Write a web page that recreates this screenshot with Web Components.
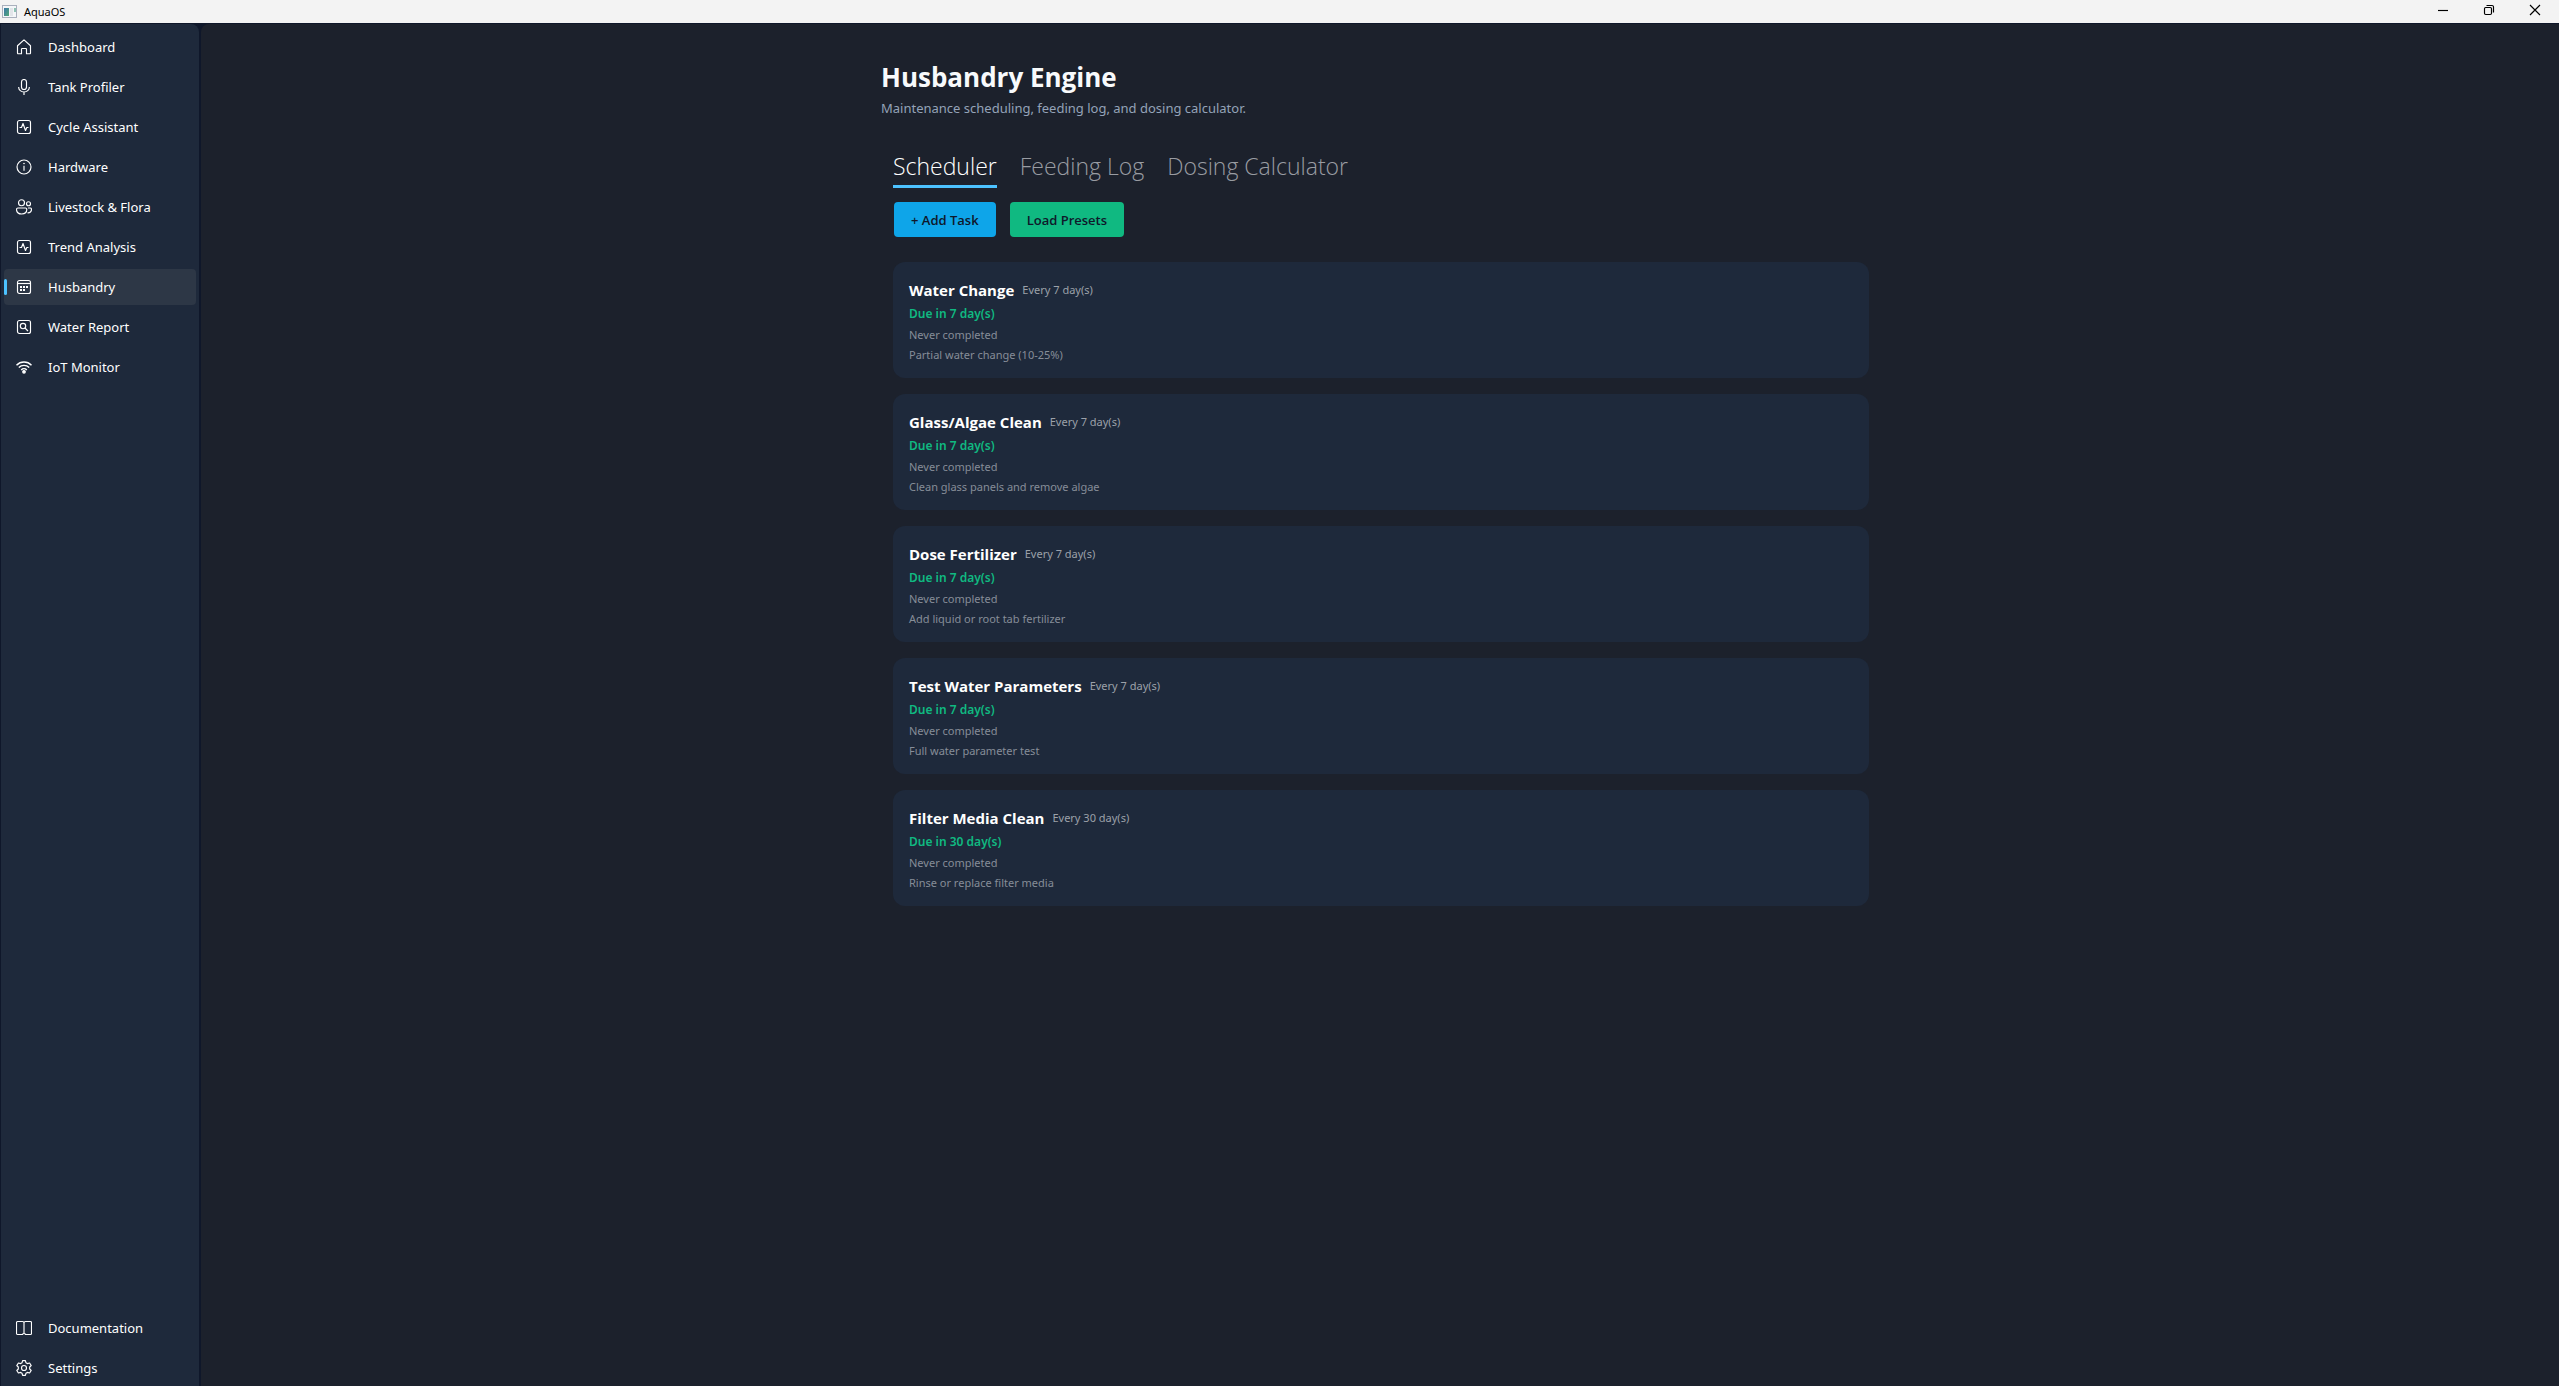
<!DOCTYPE html>
<html lang="en">
<head>
<meta charset="utf-8">
<meta name="viewport" content="width=device-width, initial-scale=1">
<title>AquaOS</title>
<style>
  html, body {
    height: 100%;
    margin: 0;
  }
  body {
    background: #0f172a;
    color: #fff;
    font-family: "Segoe UI", "Noto Sans", sans-serif;
    font-size: 13px;
    --display-font: "Segoe UI", "Open Sans", sans-serif;
  }
</style>
</head>
<body>
<aqua-app></aqua-app>

<script>
// 16x16 line icons
const ICONS = {
  home: '<path d="M1.500 6.700 8 .9l6.500 5.800V14a.7.7 0 0 1-.7.7h-3.300V10.200a.7.7 0 0 0-.7-.7H6.200a.7.7 0 0 0-.7.7v4.500H2.200a.7.7 0 0 1-.7-.7z"/>',
  mic: '<rect x="5.500" y=".5" width="5" height="10" rx="2.500"/><path d="M2.700 8v.5a5.300 4.500 0 0 0 10.600 0V8M8 13v3"/>',
  pulse: '<rect x="1.500" y="1.500" width="13" height="13" rx="2"/><path d="M3.500 8.500h2l1.500-4 2.500 7 1.300-3h1.700"/>',
  info: '<circle cx="8" cy="8" r="7"/><path d="M8 6.700v5"/><circle cx="8" cy="4.600" r=".5" fill="currentColor" stroke-width=".6"/>',
  people: '<circle cx="5.500" cy="3.700" r="3"/><circle cx="12.500" cy="4.700" r="2"/><path d="M2 9h7.500a1.300 1.300 0 0 1 1.300 1.300c0 3-2 4.700-5.100 4.700S.5 13.300.5 10.300A1.400 1.400 0 0 1 2 9zM12 9h2.200a1.300 1.300 0 0 1 1.300 1.300c0 2.200-1.500 3.700-4 3.500"/>',
  calendar: '<rect x="1.500" y="1.500" width="13" height="13" rx="2"/><path d="M1.500 4.500h13"/><g fill="currentColor" stroke="none"><rect x="4" y="7" width="2" height="2"/><rect x="7" y="7" width="2" height="2"/><rect x="10" y="7" width="2" height="2"/><rect x="4" y="10" width="2" height="2"/><rect x="7" y="10" width="2" height="2"/></g>',
  search: '<rect x="1.500" y="1.500" width="13" height="13" rx="2"/><circle cx="7" cy="7" r="2.700"/><path d="m9 9 3 3"/>',
  wifi: '<path d="M.5 6.200a10.500 10.500 0 0 1 15 0M2.800 8.600a7.300 7.300 0 0 1 10.400 0M5.200 10.900a4 4 0 0 1 5.600 0" stroke-width="1.400"/><circle cx="8" cy="12.800" r="1.300" fill="currentColor"/>',
  book: '<path d="M1.500 1.500h5A1.500 1.500 0 0 1 8 3a1.500 1.500 0 0 1 1.500-1.500h5a1 1 0 0 1 1 1v11a1 1 0 0 1-1 1h-5A1.500 1.500 0 0 0 8 13.500a1.500 1.500 0 0 0-1.500 1h-5a1 1 0 0 1-1-1v-11a1 1 0 0 1 1-1zM8 3v10.500"/>',
  gear: '<circle cx="8" cy="8" r="2.500"/><path d="M6.600.6h2.800l.6 2.200 1.300.8 2.300-.6 1.600 2.500L13.700 7v2l1.500 1.500-1.600 2.500-2.300-.6-1.300.8-.6 2.200H6.600L6 13.200l-1.300-.8-2.300.6-1.600-2.500L2.300 9V7L.8 5.500 2.400 3l2.300.6L6 2.800z"/>',
  minimize: '<path d="M3 8.500h10"/>',
  restore: '<rect x="3.500" y="5.500" width="7" height="7" rx="1.200"/><path d="M5.500 3.500h5.500a1.500 1.500 0 0 1 1.500 1.500v5.500"/>',
  close: '<path d="m3 3 10 10M13 3 3 13"/>'
};

const TASKS = [
  { name: 'Water Change', days: 7, notes: 'Partial water change (10-25%)' },
  { name: 'Glass/Algae Clean', days: 7, notes: 'Clean glass panels and remove algae' },
  { name: 'Dose Fertilizer', days: 7, notes: 'Add liquid or root tab fertilizer' },
  { name: 'Test Water Parameters', days: 7, notes: 'Full water parameter test' },
  { name: 'Filter Media Clean', days: 30, notes: 'Rinse or replace filter media' }
];

class AquaIcon extends HTMLElement {
  constructor() {
    super();
    this.attachShadow({ mode: 'open' });
  }

  connectedCallback() {
    this.shadowRoot.innerHTML = `
      <style>
        :host {
          display: block;
          flex: none;
          width: 16px;
          height: 16px;
        }
        svg {
          display: block;
        }
      </style>
      <svg width="16" height="16" viewBox="0 0 16 16" fill="none" stroke="currentColor" stroke-width="1.15" stroke-linejoin="round" aria-hidden="true">${ICONS[this.getAttribute('name')]}</svg>
    `;
  }
}
customElements.define('aqua-icon', AquaIcon);

class TitleBar extends HTMLElement {
  constructor() {
    super();
    this.attachShadow({ mode: 'open' }).innerHTML = `
      <style>
        :host {
          display: flex;
          align-items: center;
          height: 23px;
          background: #f3f3f3;
          color: #000;
          font-size: 11px;
        }
        .logo {
          margin: 0 7px 0 2px;
        }
        .name {
          flex: 1;
        }
        button {
          display: grid;
          place-items: center;
          width: 46px;
          height: 23px;
          padding: 0 2px 3px 0;
          border: 0;
          background: none;
          color: inherit;
        }
      </style>
      <svg class="logo" width="15" height="13" viewBox="0 0 15 13" aria-hidden="true">
        <defs>
          <linearGradient id="screen" x2="1" y2="1">
            <stop offset="0" stop-color="#3a76a8"/>
            <stop offset="1" stop-color="#53a878"/>
          </linearGradient>
        </defs>
        <rect x=".5" y=".5" width="14" height="12" fill="#f4f6f8" stroke="#a9b0bd"/>
        <rect x="2" y="3" width="5" height="8" fill="url(#screen)"/>
        <rect x="8" y="3" width="3" height="8" fill="#e2e5e9"/>
        <rect x="12" y="3" width="2" height="4" fill="#8fc3b4"/>
      </svg>
      <span class="name"><slot></slot></span>
      <button aria-label="Minimize"><aqua-icon name="minimize"></aqua-icon></button>
      <button aria-label="Restore"><aqua-icon name="restore"></aqua-icon></button>
      <button aria-label="Close"><aqua-icon name="close"></aqua-icon></button>
    `;
  }
}
customElements.define('title-bar', TitleBar);

class NavItem extends HTMLElement {
  constructor() {
    super();
    this.attachShadow({ mode: 'open' });
  }

  connectedCallback() {
    this.shadowRoot.innerHTML = `
      <style>
        :host {
          display: block;
        }
        a {
          display: flex;
          align-items: center;
          gap: 16px;
          height: 36px;
          padding-right: 12px;
          border-radius: 4px;
          color: #fff;
          text-decoration: none;
        }
        a::before {
          content: "";
          width: 3px;
          height: 16px;
          margin-right: -7px;
          border-radius: 2px;
        }
        :host([active]) a {
          background: #2d3746;
        }
        :host([active]) a::before {
          background: #4cc2ff;
        }
      </style>
      <a href="#" ${this.hasAttribute('active') ? 'aria-current="page"' : ''}>
        <aqua-icon name="${this.getAttribute('icon')}"></aqua-icon>
        <span><slot></slot></span>
      </a>
    `;
  }
}
customElements.define('nav-item', NavItem);

class SideNav extends HTMLElement {
  constructor() {
    super();
    this.attachShadow({ mode: 'open' }).innerHTML = `
      <style>
        :host {
          display: flex;
          box-sizing: border-box;
          width: 198px;
          padding: 5px 3px 0;
          border-radius: 0 8px 0 0;
          background: #1e293b;
        }
        nav {
          display: flex;
          flex: 1;
          flex-direction: column;
          justify-content: space-between;
        }
        .group {
          display: grid;
          gap: 4px;
        }
      </style>
      <nav>
        <div class="group"><slot></slot></div>
        <div class="group"><slot name="footer"></slot></div>
      </nav>
    `;
  }
}
customElements.define('side-nav', SideNav);

class TabBar extends HTMLElement {
  constructor() {
    super();
    this.attachShadow({ mode: 'open' }).innerHTML = `
      <style>
        div {
          display: flex;
          gap: 23px;
        }
        button {
          padding: 0 0 2px;
          border: 0;
          border-bottom: 3px solid transparent;
          background: none;
          color: #999ca2;
          font-family: var(--display-font);
          font-size: 23px;
          font-weight: 300;
          line-height: 34px;
        }
        button[aria-selected="true"] {
          border-color: #4cc2ff;
          color: #fff;
        }
      </style>
      <div role="tablist">
        <button role="tab" aria-selected="true">Scheduler</button>
        <button role="tab" aria-selected="false">Feeding Log</button>
        <button role="tab" aria-selected="false">Dosing Calculator</button>
      </div>
    `;
  }
}
customElements.define('tab-bar', TabBar);

class ActionButton extends HTMLElement {
  constructor() {
    super();
    this.attachShadow({ mode: 'open' }).innerHTML = `
      <style>
        :host {
          display: block;
        }
        button {
          height: 35px;
          padding: 0 17px;
          border: 0;
          border-radius: 4px;
          background: var(--button-color, #0ea5e9);
          color: #0f172a;
          font-family: var(--display-font);
          font-size: 13px;
          font-weight: 600;
        }
      </style>
      <button><slot></slot></button>
    `;
  }
}
customElements.define('action-button', ActionButton);

class TaskCard extends HTMLElement {
  constructor() {
    super();
    this.attachShadow({ mode: 'open' });
  }

  set task(task) {
    this._task = task;
    this.render();
  }

  render() {
    this.shadowRoot.innerHTML = `
      <style>
        :host {
          display: block;
          padding: 16px 16px 13px;
          border-radius: 12px;
          background: #1e293b;
          color: #868d98;
          font-size: 11px;
          line-height: 20px;
        }
        header {
          display: flex;
          align-items: center;
          gap: 8px;
          margin-bottom: 1px;
        }
        h2 {
          margin: 0;
          color: #fff;
          font-family: var(--display-font);
          font-size: 15px;
          line-height: 24px;
        }
        header span {
          color: #9ca1a9;
        }
        p {
          margin: 0;
        }
        .due {
          color: #10b981;
          font-size: 12px;
          font-weight: 600;
          line-height: 22px;
        }
      </style>
      <header>
        <h2>${this._task.name}</h2>
        <span>Every ${this._task.days} day(s)</span>
      </header>
      <p class="due">Due in ${this._task.days} day(s)</p>
      <p>Never completed</p>
      <p>${this._task.notes}</p>
    `;
  }
}
customElements.define('task-card', TaskCard);

class HusbandryPage extends HTMLElement {
  constructor() {
    super();
    this.attachShadow({ mode: 'open' }).innerHTML = `
      <style>
        :host {
          display: block;
          max-width: 1000px;
          margin: 0 auto;
          padding: 35px 24px;
        }
        h1 {
          margin: 0;
          color: #f8fafc;
          font-family: var(--display-font);
          font-size: 26px;
          line-height: 36px;
        }
        .subtitle {
          margin: 0;
          color: #94a3b8;
          line-height: 26px;
        }
        .panel {
          padding: 28px 12px;
        }
        .actions {
          display: flex;
          gap: 14px;
          margin: 14px 0 25px 1px;
        }
        .presets {
          --button-color: #10b981;
        }
        .tasks {
          display: grid;
          gap: 16px;
        }
      </style>
      <h1>Husbandry Engine</h1>
      <p class="subtitle">Maintenance scheduling, feeding log, and dosing calculator.</p>
      <div class="panel">
        <tab-bar></tab-bar>
        <div class="actions">
          <action-button>+ Add Task</action-button>
          <action-button class="presets">Load Presets</action-button>
        </div>
        <div class="tasks"></div>
      </div>
    `;
  }

  connectedCallback() {
    const list = this.shadowRoot.querySelector('.tasks');
    list.innerHTML = '';
    TASKS.forEach(task => {
      const card = document.createElement('task-card');
      card.task = task;
      list.appendChild(card);
    });
  }
}
customElements.define('husbandry-page', HusbandryPage);

class AquaApp extends HTMLElement {
  constructor() {
    super();
    this.attachShadow({ mode: 'open' }).innerHTML = `
      <style>
        :host {
          display: flex;
          flex-direction: column;
          min-height: 100vh;
        }
        .body {
          display: flex;
          flex: 1;
          gap: 2px;
          padding: 1px 0 0 1px;
        }
        main {
          flex: 1;
          padding-left: 2px;
          border-radius: 8px 0 0 0;
          background: #1c212c;
        }
      </style>
      <title-bar>AquaOS</title-bar>
      <div class="body">
        <side-nav>
          <nav-item icon="home">Dashboard</nav-item>
          <nav-item icon="mic">Tank Profiler</nav-item>
          <nav-item icon="pulse">Cycle Assistant</nav-item>
          <nav-item icon="info">Hardware</nav-item>
          <nav-item icon="people">Livestock &amp; Flora</nav-item>
          <nav-item icon="pulse">Trend Analysis</nav-item>
          <nav-item icon="calendar" active>Husbandry</nav-item>
          <nav-item icon="search">Water Report</nav-item>
          <nav-item icon="wifi">IoT Monitor</nav-item>
          <nav-item slot="footer" icon="book">Documentation</nav-item>
          <nav-item slot="footer" icon="gear">Settings</nav-item>
        </side-nav>
        <main><husbandry-page></husbandry-page></main>
      </div>
    `;
  }
}
customElements.define('aqua-app', AquaApp);
</script>
</body>
</html>
